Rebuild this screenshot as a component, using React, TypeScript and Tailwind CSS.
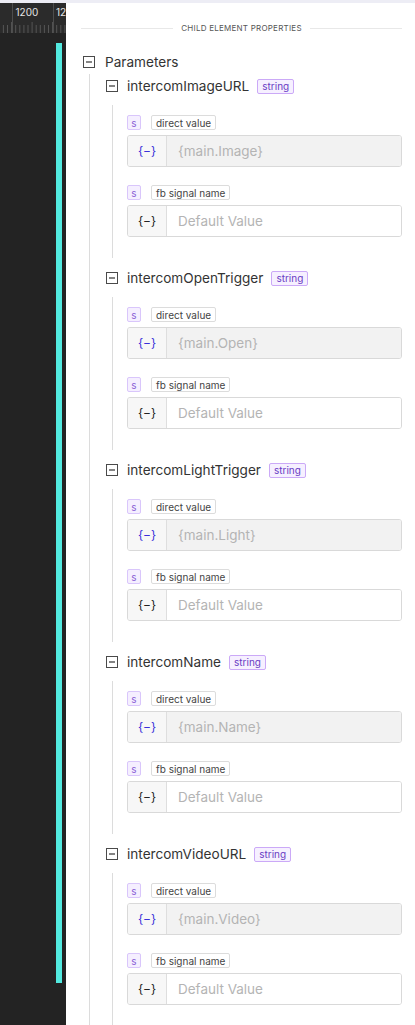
import React from "react";

const FONT = { fontFamily: "Inter, 'Noto Sans', sans-serif" };

type Param = { name: string; value: string };

const PARAMS: Param[] = [
  { name: "intercomImageURL", value: "{main.Image}" },
  { name: "intercomOpenTrigger", value: "{main.Open}" },
  { name: "intercomLightTrigger", value: "{main.Light}" },
  { name: "intercomName", value: "{main.Name}" },
  { name: "intercomVideoURL", value: "{main.Video}" },
];

// small square with a minus sign, used to collapse tree nodes
function MinusBox() {
  return (
    <svg width="12" height="12" viewBox="0 0 12 12" className="shrink-0">
      <rect x="0.5" y="0.5" width="11" height="11" fill="white" stroke="#4a4a4a" strokeWidth="1" />
      <line x1="3" y1="6" x2="9" y2="6" stroke="#333" strokeWidth="1.2" />
    </svg>
  );
}

function Ruler() {
  const ticks = [];
  for (let i = 0; i < 16; i++) {
    const x = 3.4 + i * 4.1;
    const tall = i % 5 === 2;
    ticks.push(
      <line key={i} x1={x} y1={tall ? 19 : 22} x2={x} y2={30} stroke="#555" strokeWidth="1" />
    );
  }
  return (
    <svg width="66" height="30" viewBox="0 0 66 30" className="block">
      <rect width="66" height="30" fill="#2b2b2b" />
      <line x1="12.5" y1="0" x2="12.5" y2="30" stroke="#4d4d4d" />
      <line x1="53.5" y1="0" x2="53.5" y2="30" stroke="#4d4d4d" />
      {ticks}
      <text x="15.5" y="13" fontSize="10" fill="#e4e4e4" fontFamily="Inter, sans-serif">1200</text>
      <text x="56" y="13" fontSize="10" fill="#e4e4e4" fontFamily="Inter, sans-serif">12</text>
    </svg>
  );
}

function Tag({ label }: { label: string }) {
  return (
    <div className="flex items-center gap-[10px]">
      <span className="flex h-[15px] w-[14px] items-center justify-center rounded-[2px] border border-[#d9c6fb] bg-[#f5efff] text-[10px] leading-none text-[#8a5fd6]">
        s
      </span>
      <span className="flex h-[15px] items-center rounded-[2px] border border-[#dcdcdc] bg-white px-[4px] text-[10px] leading-none text-[#444]">
        {label}
      </span>
    </div>
  );
}

function ValueInput({ placeholder, bound }: { placeholder: string; bound: boolean }) {
  return (
    <div className="flex h-[32px] overflow-hidden rounded-[3px] border border-[#d9d9d9]">
      <div
        className={`flex w-[39px] shrink-0 items-center justify-center border-r border-[#dedede] bg-[#f7f7f7] text-[12px] ${
          bound ? "text-[#3a30d9]" : "text-[#222]"
        }`}
      >
        {"{−}"}
      </div>
      <div
        className={`flex flex-1 items-center pl-[11px] text-[13.5px] text-[#b4b4b4] ${
          bound ? "bg-[#f2f2f2]" : "bg-white"
        }`}
      >
        {placeholder}
      </div>
    </div>
  );
}

function ParamSection({ param, first }: { param: Param; first: boolean }) {
  return (
    <div className={first ? "" : "mt-[11px]"}>
      <div className="flex h-[18px] items-center">
        <MinusBox />
        <span className="ml-[9px] text-[13.6px] text-[#333]">{param.name}</span>
        <span className="ml-[8px] flex h-[15px] items-center rounded-[2px] border border-[#cba9f7] bg-[#f6f0ff] px-[4px] text-[10px] leading-none text-[#6a3cc4]">
          string
        </span>
      </div>
      <div className="ml-[6px] mt-[10px] h-[153px] border-l border-[#dcdcdc] pl-[14px] pt-[10px]">
        <Tag label="direct value" />
        <div className="mt-[5px]">
          <ValueInput placeholder={param.value} bound />
        </div>
        <div className="mt-[18px]">
          <Tag label="fb signal name" />
        </div>
        <div className="mt-[5px]">
          <ValueInput placeholder="Default Value" bound={false} />
        </div>
      </div>
    </div>
  );
}

export default function App() {
  return (
    <div className="h-[1025px] w-[415px] overflow-hidden bg-white" style={FONT}>
      <div className="h-[3px] bg-[#ededf5]" />
      <div className="flex h-[1022px]">
        {/* canvas side */}
        <div className="w-[66px] shrink-0 bg-[#232323]">
          <Ruler />
          <div className="ml-[56px] mt-[10px] h-[940px] w-[6px] bg-[#52e9df]" />
        </div>

        {/* properties panel */}
        <div className="flex-1 pl-[15px] pr-[13px] pt-[19px]">
          <div className="flex h-[12px] items-center">
            <div className="h-px flex-1 bg-[#e8e8e8]" />
            <span className="mx-[8px] text-[8px] uppercase tracking-[0.03em] text-[#555]">
              Child Element Properties
            </span>
            <div className="h-px flex-1 bg-[#e8e8e8]" />
          </div>

          <div className="ml-[2px] mt-[18px] flex h-[20px] items-center">
            <MinusBox />
            <span className="ml-[10px] text-[13.6px] text-[#333]">Parameters</span>
          </div>

          <div className="ml-[8px] mt-[2px] h-[960px] border-l border-[#dcdcdc] pl-[16px] pt-[3px]">
            {PARAMS.map((p, i) => (
              <ParamSection key={p.name} param={p} first={i === 0} />
            ))}
          </div>
        </div>
      </div>
    </div>
  );
}
